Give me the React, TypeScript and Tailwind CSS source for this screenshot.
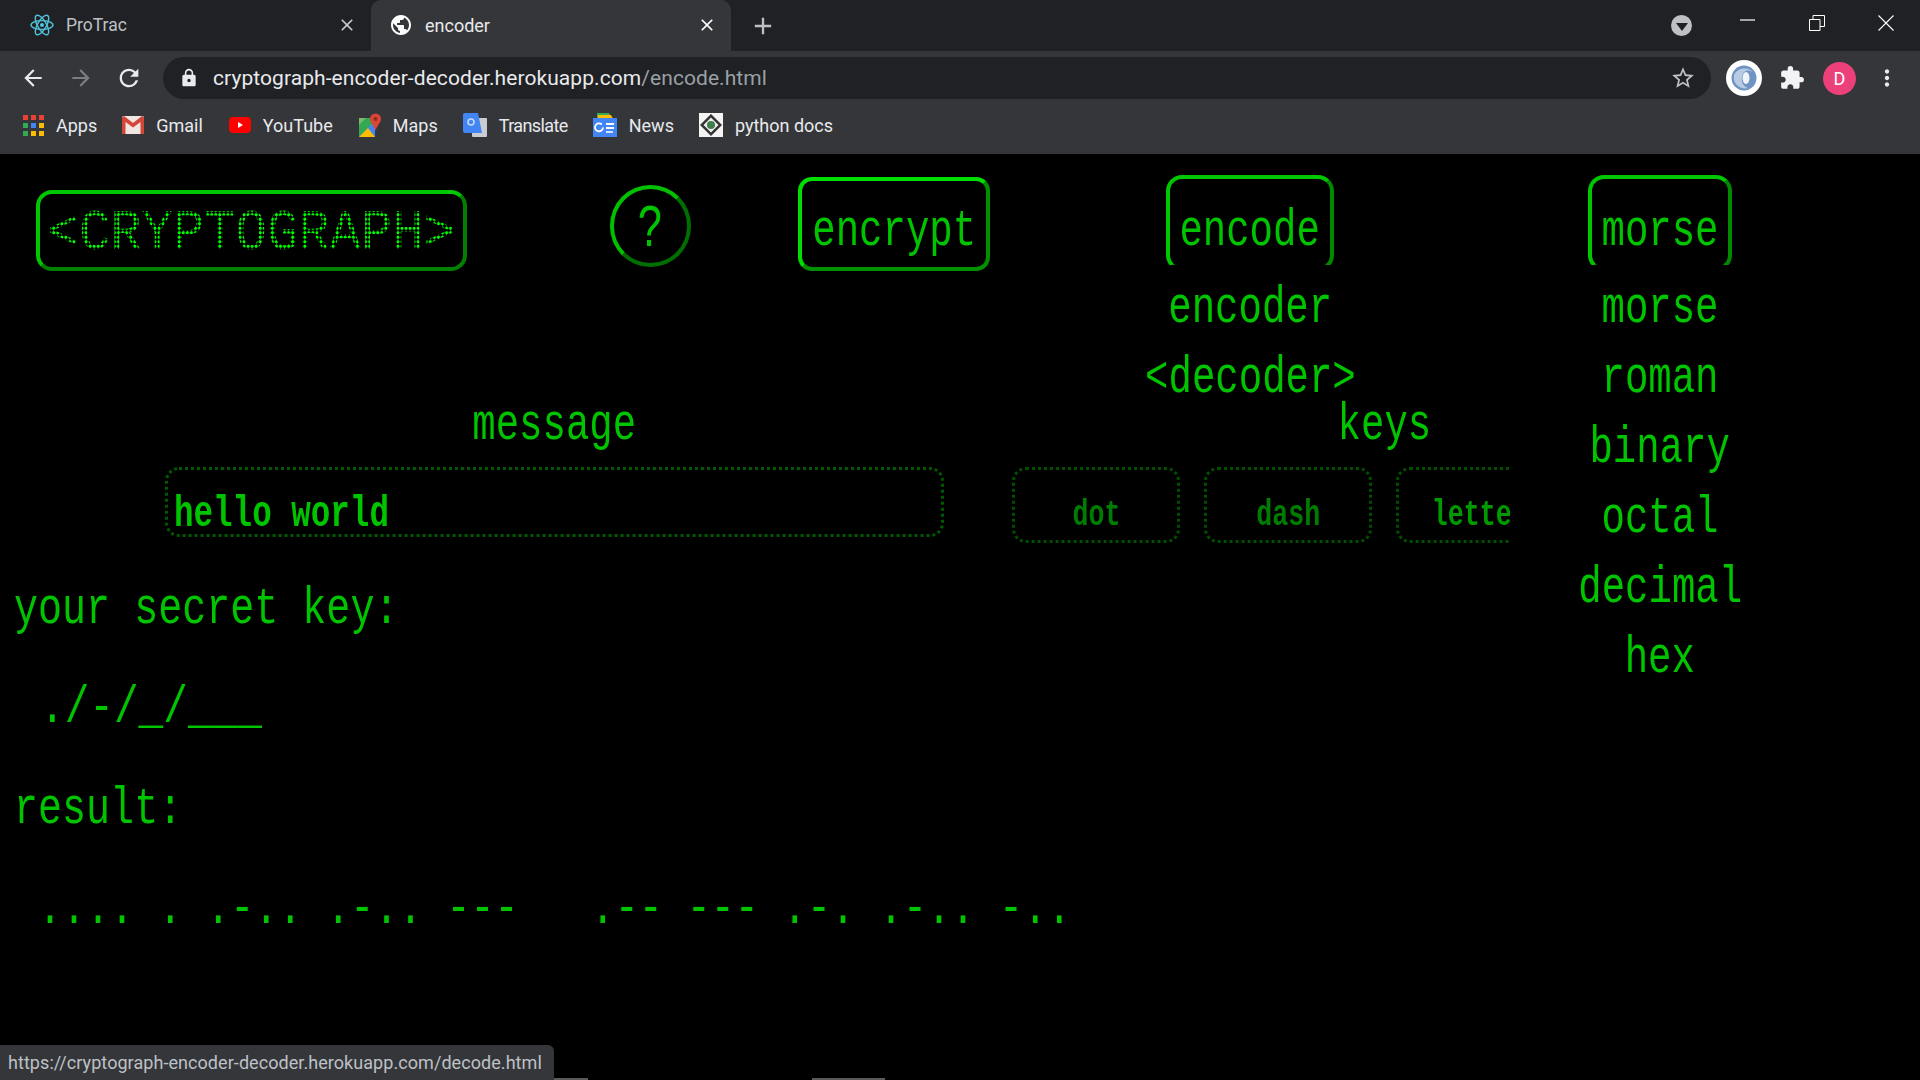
import { MdAdd, MdArrowBack, MdArrowForward, MdClose, MdExtension, MdLock, MdMoreVert, MdPublic, MdRefresh, MdStarBorder } from 'react-icons/md';

const crt = "font-['Liberation_Mono',monospace] text-[#00c400] whitespace-pre";
const morseItems = ['morse', 'roman', 'binary', 'octal', 'decimal', 'hex'];

function ReactLogo() {
  return (
    <svg width="24" height="24" viewBox="-12 -12 24 24" fill="none" stroke="#4fc3d9" strokeWidth="1.4">
      <ellipse rx="11" ry="4.4" />
      <ellipse rx="11" ry="4.4" transform="rotate(60)" />
      <ellipse rx="11" ry="4.4" transform="rotate(120)" />
      <circle r="2.1" fill="#4fc3d9" stroke="none" />
    </svg>
  );
}

function AppsIcon() {
  const colors = ['#ea4335', '#ea4335', '#ea4335', '#34a853', '#4285f4', '#fbbc04', '#34a853', '#fbbc04', '#fbbc04'];
  return (
    <div className="grid grid-cols-3 gap-[3px]">
      {colors.map((c, i) => (
        <span key={i} className="h-[5px] w-[5px]" style={{ backgroundColor: c }} />
      ))}
    </div>
  );
}

function GmailIcon() {
  return (
    <svg width="22" height="18" viewBox="0 0 22 18">
      <rect width="22" height="18" rx="1.5" fill="#f1e6e4" />
      <path d="M0 1.5V18h3.5V6L11 11.5 18.5 6v12H22V1.5L20 0 11 7 2 0Z" fill="#d44638" />
    </svg>
  );
}

function YoutubeIcon() {
  return (
    <svg width="22" height="16" viewBox="0 0 22 16">
      <rect width="22" height="16" rx="4" fill="#ff0000" />
      <path d="M9 5l5 3-5 3Z" fill="#fff" />
    </svg>
  );
}

function MapsIcon() {
  return (
    <svg width="22" height="24" viewBox="0 0 22 24">
      <path d="M0 5h16v19H0Z" fill="#34a853" />
      <path d="M0 24 16 8v16Z" fill="#4285f4" />
      <path d="M0 24 9 15l7 9Z" fill="#fbbc04" />
      <path d="M0 5h7L0 12Z" fill="#7cb96a" />
      <circle cx="16.5" cy="6" r="5.5" fill="#db4437" />
      <path d="M12 9l4.5 8 4.5-8Z" fill="#db4437" />
      <circle cx="16.5" cy="6" r="2" fill="#8f2a20" />
    </svg>
  );
}

function TranslateIcon() {
  return (
    <svg width="24" height="24" viewBox="0 0 24 24">
      <rect x="9" y="5" width="15" height="19" rx="1" fill="#c9ccd0" />
      <path d="M2 0h13l4 20H2a2 2 0 0 1-2-2V2a2 2 0 0 1 2-2Z" fill="#4285f4" />
      <circle cx="8" cy="9" r="3" fill="none" stroke="#c8d9f7" strokeWidth="1.6" />
    </svg>
  );
}

function NewsIcon() {
  return (
    <svg width="24" height="24" viewBox="0 0 24 24">
      <path d="M4 0h12l3 5H4Z" fill="#34a853" />
      <path d="M16 1l5 5H13Z" fill="#ea4335" />
      <path d="M5 2h13l2 4H5Z" fill="#fbbc04" />
      <rect y="5" width="24" height="19" fill="#4285f4" />
      <rect x="13" y="10" width="8" height="2" fill="#fff" />
      <rect x="13" y="14" width="8" height="2" fill="#fff" />
      <rect x="13" y="18" width="7" height="2" fill="#d2e3fc" />
      <path d="M10 14.500a4 4 0 1 1-1.200-3" fill="none" stroke="#fff" strokeWidth="1.800" />
    </svg>
  );
}

function PythonDocsIcon() {
  return (
    <svg width="24" height="24" viewBox="0 0 24 24">
      <rect width="24" height="24" fill="#f4f4f4" />
      <path d="M12 1 23 12 12 23 1 12Z" fill="#333" />
      <path d="M12 4.500 19.500 12 12 19.500 4.500 12Z" fill="#eee" />
      <circle cx="12" cy="12" r="4" fill="#3f7d4a" />
    </svg>
  );
}

function ExtensionIcon() {
  return (
    <svg width="36" height="36" viewBox="0 0 36 36">
      <circle cx="18" cy="18" r="18" fill="#fff" />
      <circle cx="18" cy="18" r="12.500" fill="#6f93c2" />
      <path d="M8 15c3-7 13-9 19-3-5-3-10-2-11 5-1 5 1 9 6 11-7 2-16-4-14-13Z" fill="#b8cbe2" />
      <ellipse cx="20" cy="18" rx="3.500" ry="6" fill="#f1f5fa" />
    </svg>
  );
}

const bookmarks = [
  { label: 'Apps', icon: <AppsIcon />, w: 'w-[21px]', lead: '', fit: '' },
  { label: 'Gmail', icon: <GmailIcon />, w: 'w-[22px]', lead: 'ml-[25px]', fit: '' },
  { label: 'YouTube', icon: <YoutubeIcon />, w: 'w-[22px]', lead: 'ml-[26px]', fit: '' },
  { label: 'Maps', icon: <MapsIcon />, w: 'w-[22px]', lead: 'ml-[26px]', fit: '' },
  { label: 'Translate', icon: <TranslateIcon />, w: 'w-[24px]', lead: 'ml-[25px]', fit: 'tracking-[-0.6px]' },
  { label: 'News', icon: <NewsIcon />, w: 'w-[24px]', lead: 'ml-[25px]', fit: '' },
  { label: 'python docs', icon: <PythonDocsIcon />, w: 'w-[24px]', lead: 'ml-[25px]', fit: '' },
];

function BrowserChrome() {
  return (
    <header className="shrink-0 font-['Roboto',sans-serif]">
      <div className="flex h-[51px] items-start bg-[#202124] text-white">
        <div className="flex h-[50px] w-[371px] items-center pl-[30px] pr-[14px]">
          <ReactLogo />
          <span className="ml-[12px] flex-1 text-[17.5px] text-[#bdc1c6]">ProTrac</span>
          <MdClose size={20} className="text-[#c4c7cb]" />
        </div>
        <div className="flex h-[51px] w-[360px] items-center rounded-t-[10px] bg-[#35363a] pb-[1px] pl-[18px] pr-[14px]">
          <MdPublic size={24} className="text-white" />
          <span className="ml-[12px] flex-1 text-[18px] text-[#e8eaed]">encoder</span>
          <MdClose size={20} />
        </div>
        <div className="ml-[18px] flex h-[51px] items-center">
          <MdAdd size={28} className="text-[#bdc1c6]" />
        </div>
        <div className="ml-auto flex h-[51px] items-center">
          <span className="mr-[48px] flex h-[21px] w-[21px] items-center justify-center rounded-full bg-[#bdc1c6]">
            <span className="mt-[3px] border-x-[6px] border-t-[8px] border-x-transparent border-t-[#202124]" />
          </span>
          <svg width="16" height="4" viewBox="0 0 16 4" className="mb-[12px] mr-[53px]" stroke="#fff">
            <path d="M0 2h15" strokeWidth="1.200" />
          </svg>
          <svg width="16" height="16" viewBox="0 0 16 16" className="mb-[6px] mr-[53px]" fill="none" stroke="#fff" strokeWidth="1">
            <path d="M.5 4.500h10.500v11H.5Z" />
            <path d="M4 4.500V.5h11.500v11H11" />
          </svg>
          <svg width="16" height="16" viewBox="0 0 16 16" className="mb-[6px] mr-[26px]" stroke="#fff" strokeWidth="1.100">
            <path d="M.5.5l15 15M15.500.5l-15 15" />
          </svg>
        </div>
      </div>
      <div className="flex h-[54px] items-center bg-[#35363a]">
        <MdArrowBack size={26} className="ml-[20px] text-[#e8eaed]" />
        <MdArrowForward size={26} className="ml-[22px] text-[#7b7d80]" />
        <MdRefresh size={28} className="ml-[21px] text-[#e8eaed]" />
        <div className="ml-[20px] flex h-[42px] w-[1548px] items-center rounded-full bg-[#202124] pl-[16px] pr-[15px]">
          <MdLock size={20} className="text-[#e8eaed]" />
          <span className="ml-[14px] flex-1 pt-[2px] text-[21px] tracking-[0.07px] text-[#e8eaed]">
            cryptograph-encoder-decoder.herokuapp.com<span className="text-[#9aa0a6]">/encode.html</span>
          </span>
          <MdStarBorder size={26} className="text-[#bdc1c6]" />
        </div>
        <div className="ml-[15px] flex items-center">
          <ExtensionIcon />
          <MdExtension size={26} className="ml-[17px] text-[#f1f3f4]" />
          <span className="ml-[18px] flex h-[33px] w-[33px] items-center justify-center rounded-full bg-[#ec407a] text-[18px] text-white">D</span>
          <MdMoreVert size={26} className="ml-[18px] text-[#e8eaed]" />
        </div>
      </div>
      <div className="flex h-[49px] items-start bg-[#35363a] pl-[23px] pt-[7px]">
        {bookmarks.map((b) => (
          <div key={b.label} className={`flex h-[26px] items-center ${b.lead}`}>
            <div className={`flex justify-center ${b.w}`}>{b.icon}</div>
            <span className={`ml-[12px] text-[18px] text-[#e8eaed] ${b.fit}`}>{b.label}</span>
          </div>
        ))}
      </div>
    </header>
  );
}

function Word({ text }: { text: string }) {
  return (
    <div className="flex justify-center">
      <span className={`inline-block shrink-0 origin-center scale-x-[0.75] text-[52px] leading-[70px] ${crt}`}>{text}</span>
    </div>
  );
}

function Line({ text, className = '' }: { text: string; className?: string }) {
  return <div className={`w-fit origin-left text-[52px] leading-[50px] ${crt} ${className}`}>{text}</div>;
}

// the open menu cuts these buttons off just above their bottom border
function DropdownButton({ text, width }: { text: string; width: string }) {
  return (
    <div className={`h-[90px] overflow-hidden ${width}`}>
      <div className="flex h-[96px] items-center justify-center rounded-[16px] border-[4px] border-t-[#00c800] border-r-[#008a00] border-b-[#008a00] border-l-[#00c800] pt-[17px]">
        <Word text={text} />
      </div>
    </div>
  );
}

function KeyBox({ text, tone }: { text: string; tone: string }) {
  return (
    <div className="flex h-[76px] w-[168px] shrink-0 items-center justify-center rounded-[14px] border-[3px] border-dotted border-[#004f00] pt-[22px]">
      <span className={`inline-block scale-x-[0.74] font-['Liberation_Mono',monospace] text-[36px] font-bold ${tone}`}>{text}</span>
    </div>
  );
}

export default function App() {
  return (
    <div className="flex h-screen w-screen flex-col overflow-hidden bg-black">
      <BrowserChrome />
      <main className="relative flex flex-1 items-start">
        <div className="w-[1588px] shrink-0">
          <div className="flex h-[244px] items-start">
            <div className="ml-[36px] mt-[36px] flex h-[81px] w-[431px] items-center justify-center rounded-[16px] border-[4px] border-t-[#00c800] border-r-[#007f00] border-b-[#007f00] border-l-[#00c800] pt-[5px]">
              <span className="inline-block scale-x-[0.9] whitespace-pre font-['Liberation_Mono',monospace] text-[58px] text-[#00ff00] [mask-image:radial-gradient(circle_closest-side,#000_72%,transparent_88%)] [mask-size:4.5px_4.5px]">
                {'<CRYPTOGRAPH>'}
              </span>
            </div>
            <div className="ml-[143px] mt-[31px] flex h-[82px] w-[81px] items-center justify-center rounded-full border-[4px] border-t-[#00c000] border-r-[#006f00] border-b-[#006f00] border-l-[#00c000] pt-[6px]">
              <span className={`scale-x-[0.7] text-[62px] ${crt}`}>?</span>
            </div>
            <div className="ml-[107px] mt-[23px] flex h-[94px] w-[192px] items-center justify-center rounded-[14px] border-[4px] border-t-[#00e000] border-r-[#009000] border-b-[#009000] border-l-[#00e000] pt-[15px]">
              <Word text="encrypt" />
            </div>
            <div className="ml-[176px] mt-[21px] w-[168px] shrink-0">
              <DropdownButton text="encode" width="w-[168px]" />
              <div className="mt-[9px]">
                <Word text="encoder" />
                <Word text="<decoder>" />
              </div>
            </div>
          </div>
          <div className="flex items-start">
            <div className="ml-[165px] w-[779px] shrink-0">
              <div className="mb-[16px] pt-[3px] text-center">
                <span className={`inline-block scale-x-[0.75] text-[52px] leading-[50px] ${crt}`}>message</span>
              </div>
              <div className="flex h-[70px] items-center rounded-[14px] border-[3px] border-dotted border-[#005800] pl-[6px] pt-[24px]">
                <span className="inline-block origin-left scale-x-[0.74] whitespace-pre font-['Liberation_Mono',monospace] text-[44px] font-bold text-[#00c400]">hello world</span>
              </div>
            </div>
            <div className="ml-[68px] w-[498px] shrink-0">
              <div className="mb-[16px] w-[744px] pt-[3px] text-center">
                <span className={`inline-block scale-x-[0.75] text-[52px] leading-[50px] ${crt}`}>keys</span>
              </div>
              <div className="flex gap-[24px] overflow-hidden">
                <KeyBox text="dot" tone="text-[#007d00]" />
                <KeyBox text="dash" tone="text-[#007d00]" />
                <KeyBox text="letter" tone="text-[#009a00]" />
              </div>
            </div>
          </div>
          <Line text="your secret key:" className="ml-[14px] mt-[42px] scale-x-[0.77]" />
          <Line text="./-/_/___" className="ml-[40px] mt-[49px] scale-x-[0.79]" />
          <Line text="result:" className="ml-[14px] mt-[51px] scale-x-[0.77]" />
          <Line text=".... . .-.. .-.. ---   .-- --- .-. .-.. -.." className="ml-[38px] mt-[50px] scale-x-[0.77]" />
        </div>
        <div className="mt-[21px] w-[144px] shrink-0">
          <DropdownButton text="morse" width="w-[144px]" />
          <div className="mt-[9px]">
            {morseItems.map((m) => (
              <Word key={m} text={m} />
            ))}
          </div>
        </div>
        <div className="absolute bottom-0 left-0 flex h-[35px] w-[554px] items-center rounded-tr-[6px] bg-[#35363a] pl-[8px] font-['Roboto',sans-serif] text-[18px] tracking-[0.06px] text-[#bdc1c6]">
          https://cryptograph-encoder-decoder.herokuapp.com/decode.html
        </div>
        <div className="absolute bottom-0 left-[554px] h-[2px] w-[34px] bg-[#5a5a5a]" />
        <div className="absolute bottom-0 left-[812px] h-[2px] w-[73px] bg-[#5a5a5a]" />
      </main>
    </div>
  );
}
